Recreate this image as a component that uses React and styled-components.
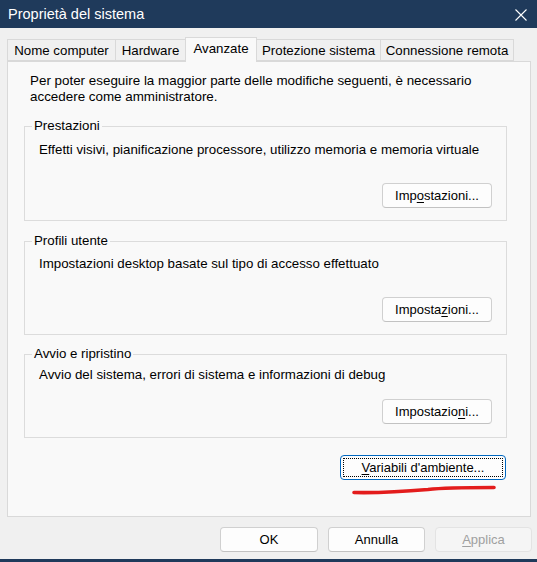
import React from "react";
import styled, { createGlobalStyle } from "styled-components";

const GlobalStyle = createGlobalStyle`
  html, body {
    margin: 0;
    padding: 0;
    background: #1f3a5b;
  }
  body {
    font-family: "Liberation Sans", Arial, sans-serif;
    color: #000;
  }
`;

const Window = styled.div`
  position: relative;
  width: 537px;
  height: 562px;
  background: #f0f0f0;
  display: flex;
  flex-direction: column;
  overflow: hidden;
`;

const TitleBar = styled.div`
  height: 28px;
  background: #1f3a5b;
  display: flex;
  align-items: center;
  justify-content: space-between;
  padding: 0 10px 0 8px;
  color: #fff;
  font-size: 14.5px;
  flex-shrink: 0;
`;

const CloseIcon = styled.svg`
  display: block;
  margin-top: 1px;
`;

const TabStrip = styled.div`
  display: flex;
  align-items: flex-end;
  height: 24px;
  margin: 9px 0 0 7px;
  position: relative;
  z-index: 1;
`;

const Tab = styled.div`
  box-sizing: border-box;
  width: ${p => p.$w}px;
  height: ${p => (p.$active ? 25 : 22)}px;
  margin-bottom: ${p => (p.$active ? -1 : 0)}px;
  display: flex;
  align-items: center;
  justify-content: center;
  padding-bottom: ${p => (p.$active ? 3 : 0)}px;
  font-size: 13.3px;
  background: ${p => (p.$active ? "#f9f9f9" : "#f0f0f0")};
  border: 1px solid #d9d9d9;
  border-bottom: ${p => (p.$active ? "none" : "1px solid #d9d9d9")};
  margin-left: -1px;
  &:first-child {
    margin-left: 0;
  }
`;

const Panel = styled.div`
  box-sizing: border-box;
  height: 456px;
  margin: 0 6px 0 7px;
  background: #f9f9f9;
  border: 1px solid #d9d9d9;
  display: flex;
  flex-direction: column;
  font-size: 13.3px;
`;

const Intro = styled.p`
  margin: 11px 30px 13px 22px;
  line-height: 16px;
  font-size: 13.4px;
`;

const Group = styled.fieldset`
  margin: 0 23px ${p => p.$gap}px 16px;
  padding: ${p => p.$top}px 14px ${p => p.$bottom}px 7px;
  border: 1px solid #dcdcdc;
  min-width: 0;
  display: flex;
  flex-direction: column;
`;

const Legend = styled.legend`
  padding: 0 2px;
  line-height: 16px;
  font-size: 13.3px;
`;

const Description = styled.div`
  line-height: 16px;
  padding-left: 7px;
`;

const Button = styled.button`
  box-sizing: border-box;
  width: ${p => p.$w}px;
  height: 25px;
  font-family: "Liberation Sans", Arial, sans-serif;
  font-size: 13px;
  color: ${p => (p.disabled ? "#a0a0a0" : "#000")};
  background: ${p => (p.disabled ? "#f5f5f5" : "#fdfdfd")};
  border: 1px solid ${p => (p.disabled ? "#e3e3e3" : "#d0d0d0")};
  border-bottom-color: ${p => (p.disabled ? "#e3e3e3" : "#c2c2c2")};
  border-radius: 4px;
  padding: 0;
  position: relative;
  cursor: default;
`;

const GroupButton = styled(Button)`
  align-self: flex-end;
  margin-top: ${p => p.$mt}px;
`;

const FocusButton = styled(Button)`
  align-self: flex-end;
  margin: 17px 24px 0 0;
  border: 1px solid #0067c0;
  &::after {
    content: "";
    position: absolute;
    inset: 2px;
    border: 1px dotted #000;
    border-radius: 1px;
  }
`;

const Accel = styled.u`
  text-decoration-thickness: 1px;
  text-underline-offset: 2px;
`;

const Footer = styled.div`
  display: flex;
  justify-content: flex-end;
  gap: 10px;
  margin: 10px 5px 0 0;
`;

const BottomEdge = styled.div`
  margin-top: auto;
  height: 3px;
  background: #1f3a5b;
`;

const Annotation = styled.svg`
  position: absolute;
  left: 0;
  top: 0;
  pointer-events: none;
`;

const tabs = [
  { label: "Nome computer", w: 109 },
  { label: "Hardware", w: 71 },
  { label: "Avanzate", w: 72, active: true },
  { label: "Protezione sistema", w: 125 },
  { label: "Connessione remota", w: 134 }
];

const App = () => {
  return (
    <>
      <GlobalStyle />
      <Window>
        <TitleBar>
          <span>Proprietà del sistema</span>
          <CloseIcon width="12" height="12" viewBox="0 0 12 12">
            <path d="M0.5 0.5 L11.5 11.5 M11.5 0.5 L0.5 11.5" stroke="#fff" strokeWidth="1.1" />
          </CloseIcon>
        </TitleBar>

        <TabStrip>
          {tabs.map(t => (
            <Tab key={t.label} $w={t.w} $active={t.active}>
              {t.label}
            </Tab>
          ))}
        </TabStrip>

        <Panel>
          <Intro>
            Per poter eseguire la maggior parte delle modifiche seguenti, è necessario
            accedere come amministratore.
          </Intro>

          <Group $top={8} $bottom={12} $gap={12}>
            <Legend>Prestazioni</Legend>
            <Description>
              Effetti visivi, pianificazione processore, utilizzo memoria e memoria virtuale
            </Description>
            <GroupButton $w={110} $mt={25}>
              Imp<Accel>o</Accel>stazioni...
            </GroupButton>
          </Group>

          <Group $top={7} $bottom={12} $gap={11}>
            <Legend>Profili utente</Legend>
            <Description>Impostazioni desktop basate sul tipo di accesso effettuato</Description>
            <GroupButton $w={110} $mt={25}>
              Imposta<Accel>z</Accel>ioni...
            </GroupButton>
          </Group>

          <Group $top={5} $bottom={13} $gap={0}>
            <Legend>Avvio e ripristino</Legend>
            <Description>Avvio del sistema, errori di sistema e informazioni di debug</Description>
            <GroupButton $w={110} $mt={16}>
              Impostazio<Accel>n</Accel>i...
            </GroupButton>
          </Group>

          <FocusButton $w={166}>
            <Accel>V</Accel>ariabili d'ambiente...
          </FocusButton>
        </Panel>

        <Footer>
          <Button $w={98}>OK</Button>
          <Button $w={97}>Annulla</Button>
          <Button $w={97} disabled>
            <Accel>A</Accel>pplica
          </Button>
        </Footer>

        <BottomEdge />

        <Annotation width="537" height="562" viewBox="0 0 537 562">
          <path
            d="M354 492.5 C 380 493, 405 491.5, 428 489.5 C 445 487.5, 470 487.5, 494 487.5"
            stroke="#e31c1c"
            strokeWidth="3.6"
            strokeLinecap="round"
            fill="none"
          />
        </Annotation>
      </Window>
    </>
  );
};

export default App;
